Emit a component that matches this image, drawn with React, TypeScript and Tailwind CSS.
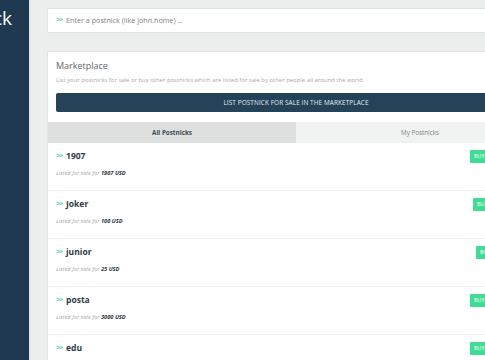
const listings = [
  { name: "1907", price: "1907 USD", buyClass: "w-[66px]" },
  { name: "Joker", price: "100 USD", buyClass: "w-[63px]" },
  { name: "junior", price: "25 USD", buyClass: "w-[60px]" },
  { name: "posta", price: "3000 USD", buyClass: "w-[66px]" },
  { name: "edu", price: "", buyClass: "w-[66px]" },
];

const Arrows = () => (
  <span className="mr-[4px] text-[7px] font-bold tracking-[-1px] text-[#3fd894]">
    &gt;&gt;
  </span>
);

export default function App() {
  return (
    <div
      className="flex h-[360px] w-[485px] overflow-hidden bg-[#eceeee]"
      style={{ fontFamily: '"Open Sans", "Noto Sans", sans-serif' }}
    >
      <aside className="flex w-[29px] shrink-0 justify-end overflow-hidden bg-[#1f3a50] pr-[17px] pt-[6px]">
        <span className="whitespace-nowrap text-[19px] leading-[24px] text-white">
          Postnick
        </span>
      </aside>
      <div className="w-[2px] shrink-0 bg-[#e3e6e6]" />

      <main className="flex w-[514px] shrink-0 flex-col gap-[18px] pl-[16px] pt-[8px]">
        <div className="flex h-[25px] shrink-0 items-center border border-[#e0e2e2] bg-white px-[8px] text-[7.2px] text-[#7d8588]">
          <Arrows />
          Enter a postnick (like john.home) ...
        </div>

        <section className="shrink-0 border border-[#e0e2e2] bg-white">
          <div className="px-[8px] pb-[10px] pt-[7px]">
            <h2 className="text-[9px] leading-[14px] text-[#5d666b]">Marketplace</h2>
            <p className="mt-[2px] text-[5.95px] leading-[10px] text-[#a3a9ab]">
              List your postnicks for sale or buy other postnicks which are listed for sale
              by other people all around the world.
            </p>
            <button className="mt-[8px] flex h-[19px] w-full items-center justify-center rounded-[2px] bg-[#244359] text-[6.4px] uppercase tracking-[0.1px] text-[#e4ecf1]">
              List postnick for sale in the marketplace
            </button>
          </div>

          <div className="grid grid-cols-2 text-[6.3px]">
            <div className="flex h-[21px] items-center justify-center bg-[#dedfdf] font-bold text-[#3a4a55]">
              All Postnicks
            </div>
            <div className="flex h-[21px] items-center justify-center bg-[#f1f2f2] text-[#7b8387]">
              My Postnicks
            </div>
          </div>

          <div className="divide-y divide-[#eeefef]">
            {listings.map((item) => (
              <div key={item.name} className="flex h-[48px] items-start px-[8px] pt-[6px]">
                <div className="flex-1">
                  <div className="flex items-center text-[8.5px] font-bold leading-[14px] text-[#2c3b47]">
                    <Arrows />
                    {item.name}
                  </div>
                  {item.price && (
                    <div className="mt-[5px] text-[5.7px] italic leading-[10px] text-[#9ea5a8]">
                      Listed for sale for{" "}
                      <span className="font-bold text-[#2c3b47]">{item.price}</span>
                    </div>
                  )}
                </div>
                <button
                  className={`${item.buyClass} mt-[1px] h-[13px] shrink-0 rounded-[1px] bg-[#3fdc96] pl-[4px] text-left text-[5.5px] uppercase text-white`}
                >
                  Buy now
                </button>
              </div>
            ))}
          </div>
        </section>
      </main>
    </div>
  );
}
